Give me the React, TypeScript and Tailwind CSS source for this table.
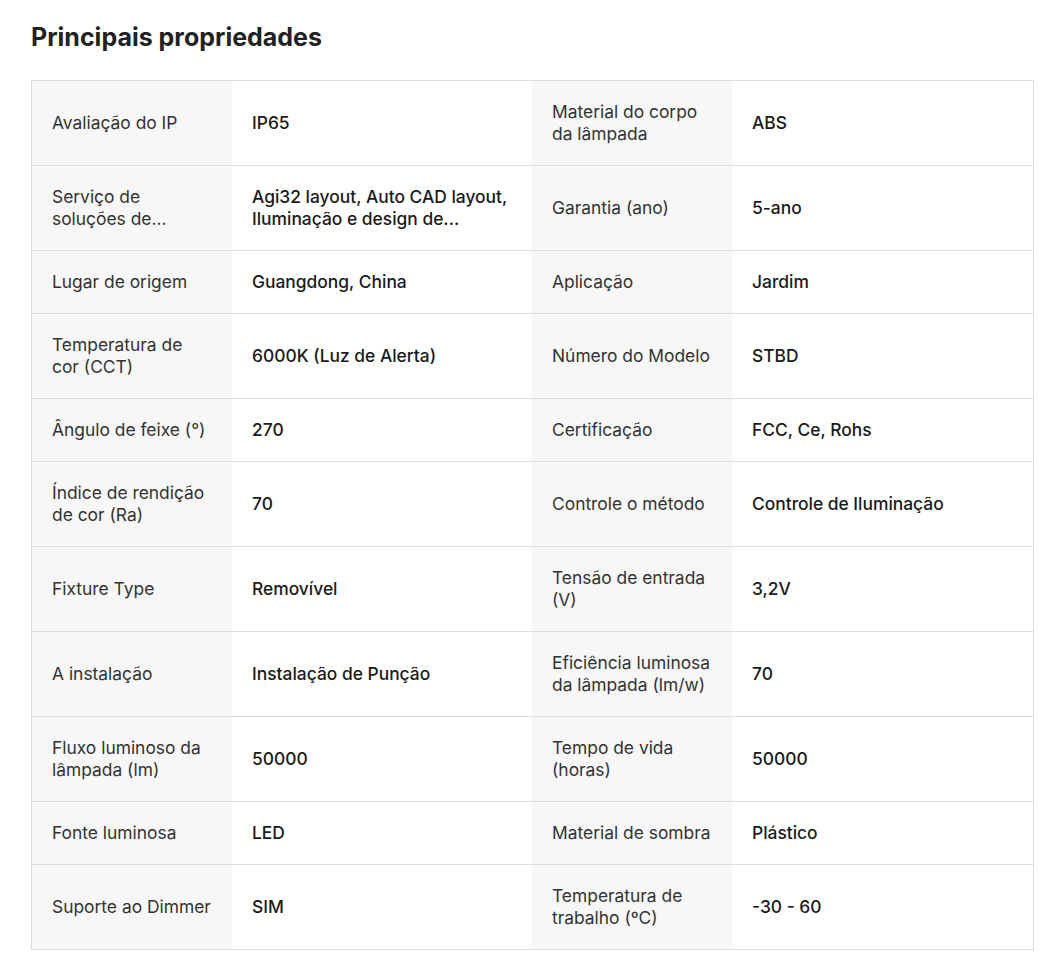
import React from 'react';

type Row = [string, string, string, string];

const rows: Row[] = [
  ['Avaliação do IP', 'IP65', 'Material do corpo da lâmpada', 'ABS'],
  ['Serviço de soluções de...', 'Agi32 layout, Auto CAD layout, Iluminação e design de...', 'Garantia (ano)', '5-ano'],
  ['Lugar de origem', 'Guangdong, China', 'Aplicação', 'Jardim'],
  ['Temperatura de cor (CCT)', '6000K (Luz de Alerta)', 'Número do Modelo', 'STBD'],
  ['Ângulo de feixe (°)', '270', 'Certificação', 'FCC, Ce, Rohs'],
  ['Índice de rendição de cor (Ra)', '70', 'Controle o método', 'Controle de Iluminação'],
  ['Fixture Type', 'Removível', 'Tensão de entrada (V)', '3,2V'],
  ['A instalação', 'Instalação de Punção', 'Eficiência luminosa da lâmpada (lm/w)', '70'],
  ['Fluxo luminoso da lâmpada (lm)', '50000', 'Tempo de vida (horas)', '50000'],
  ['Fonte luminosa', 'LED', 'Material de sombra', 'Plástico'],
  ['Suporte ao Dimmer', 'SIM', 'Temperatura de trabalho (ºC)', '-30 - 60'],
];

const Label: React.FC<{ text: string }> = ({ text }) => (
  <div className="flex items-center bg-[#f7f7f7] px-5 py-5 text-[17.4px] leading-[22px] text-[#333]">
    <span>{text}</span>
  </div>
);

const Value: React.FC<{ text: string }> = ({ text }) => (
  <div className="flex items-center bg-white px-5 py-5 text-[17.4px] leading-[22px] font-[450] text-[#1a1a1a]">
    <span>{text}</span>
  </div>
);

export default function App() {
  return (
    <div className="min-h-screen bg-white px-[31px] pt-[21px] font-['Inter',sans-serif]">
      <h2 className="text-[25px] leading-[32px] font-bold text-[#222]">Principais propriedades</h2>

      {/* Key attributes table */}
      <div className="mt-[27px] w-[1003px] border border-[#dddddd]">
        {rows.map((r, i) => (
          <div
            key={i}
            className={`grid grid-cols-[200px_300px_200px_301px] ${i > 0 ? 'border-t border-[#dddddd]' : ''}`}
          >
            <Label text={r[0]} />
            <Value text={r[1]} />
            <Label text={r[2]} />
            <Value text={r[3]} />
          </div>
        ))}
      </div>
    </div>
  );
}
